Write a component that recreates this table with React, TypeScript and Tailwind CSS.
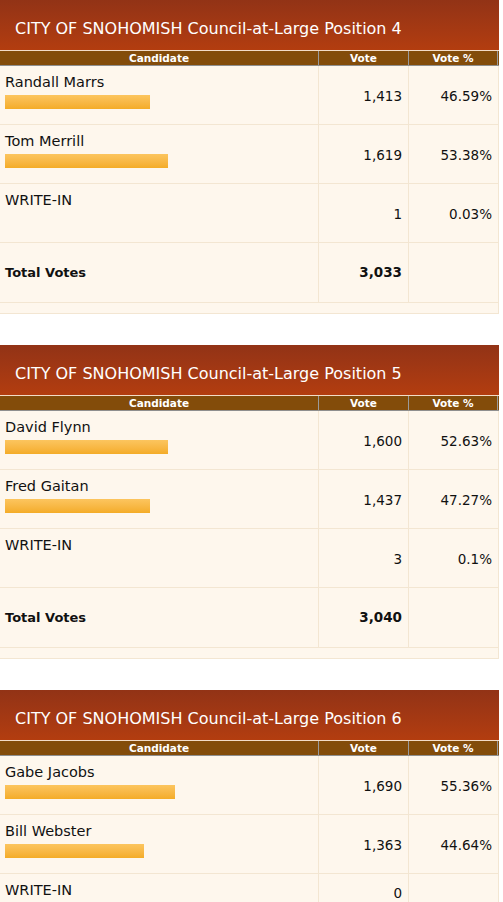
import React from "react";

type Row = { name: string; bar?: number; vote: string; pct: string; short?: boolean };
type Race = { title: string; rows: Row[]; total?: string };

const races: Race[] = [
  {
    title: "CITY OF SNOHOMISH Council-at-Large Position 4",
    rows: [
      { name: "Randall Marrs", bar: 145, vote: "1,413", pct: "46.59%" },
      { name: "Tom Merrill", bar: 163, vote: "1,619", pct: "53.38%" },
      { name: "WRITE-IN", vote: "1", pct: "0.03%" },
    ],
    total: "3,033",
  },
  {
    title: "CITY OF SNOHOMISH Council-at-Large Position 5",
    rows: [
      { name: "David Flynn", bar: 163, vote: "1,600", pct: "52.63%" },
      { name: "Fred Gaitan", bar: 145, vote: "1,437", pct: "47.27%" },
      { name: "WRITE-IN", vote: "3", pct: "0.1%" },
    ],
    total: "3,040",
  },
  {
    title: "CITY OF SNOHOMISH Council-at-Large Position 6",
    rows: [
      { name: "Gabe Jacobs", bar: 170, vote: "1,690", pct: "55.36%" },
      { name: "Bill Webster", bar: 139, vote: "1,363", pct: "44.64%" },
      { name: "WRITE-IN", vote: "0", pct: "", short: true },
    ],
  },
];

const font = { fontFamily: '"DejaVu Sans", Verdana, sans-serif' };

function RaceTable({ race }: { race: Race }) {
  return (
    <div className="w-[499px]">
      <div className="h-[51px] flex items-center pl-[15px] pt-[7px] text-white text-[16px] bg-gradient-to-b from-[#923316] to-[#b33d0f] border-b border-[#f3dcc6]">
        {race.title}
      </div>
      <div className="flex h-[15px] bg-[#834c0a] border-b border-[#8f8f8f] text-white text-[10.5px] font-bold leading-[14px]">
        <div className="w-[319px] text-center border-r border-[#9a9a9a]">Candidate</div>
        <div className="w-[90px] text-center border-r border-[#9a9a9a]">Vote</div>
        <div className="w-[89px] text-center border-r border-[#9a9a9a]">Vote %</div>
      </div>
      <div className="bg-[#fef7ed] border-r border-[#f3e6d2]">
        {race.rows.map((r, i) => (
          <div key={i} className={`flex border-b border-[#f3e6d2] ${r.short ? "h-[38px]" : "h-[59px]"}`}>
            <div className="w-[319px] border-r border-[#f3e6d2] pl-[5px] pt-[7px]">
              <div className="text-[14.5px] leading-[18px] text-[#111]">{r.name}</div>
              {r.bar ? (
                <div
                  className="mt-[4px] h-[14px] bg-gradient-to-b from-[#fcc55e] to-[#f4ac26]"
                  style={{ width: r.bar }}
                />
              ) : null}
            </div>
            <div className="w-[90px] border-r border-[#f3e6d2] flex items-center justify-end pr-[6px] pt-[2px] text-[13.5px] text-[#111]">
              {r.vote}
            </div>
            <div className="w-[89px] flex items-center justify-end pr-[6px] pt-[2px] text-[13.5px] text-[#111]">
              {r.pct}
            </div>
          </div>
        ))}
        {race.total ? (
          <>
            <div className="flex h-[60px] border-b border-[#f3e6d2]">
              <div className="w-[319px] border-r border-[#f3e6d2] pl-[5px] flex items-center text-[13px] font-bold text-[#111]">
                Total Votes
              </div>
              <div className="w-[90px] border-r border-[#f3e6d2] flex items-center justify-end pr-[6px] text-[13.5px] font-bold text-[#111]">
                {race.total}
              </div>
              <div className="w-[89px]" />
            </div>
            <div className="h-[11px] border-b border-[#f3e6d2]" />
          </>
        ) : null}
      </div>
    </div>
  );
}

export default function App() {
  return (
    <div className="w-[503px] h-[902px] overflow-hidden bg-white flex flex-col gap-[31px]" style={font}>
      {races.map((r, i) => (
        <RaceTable key={i} race={r} />
      ))}
    </div>
  );
}
